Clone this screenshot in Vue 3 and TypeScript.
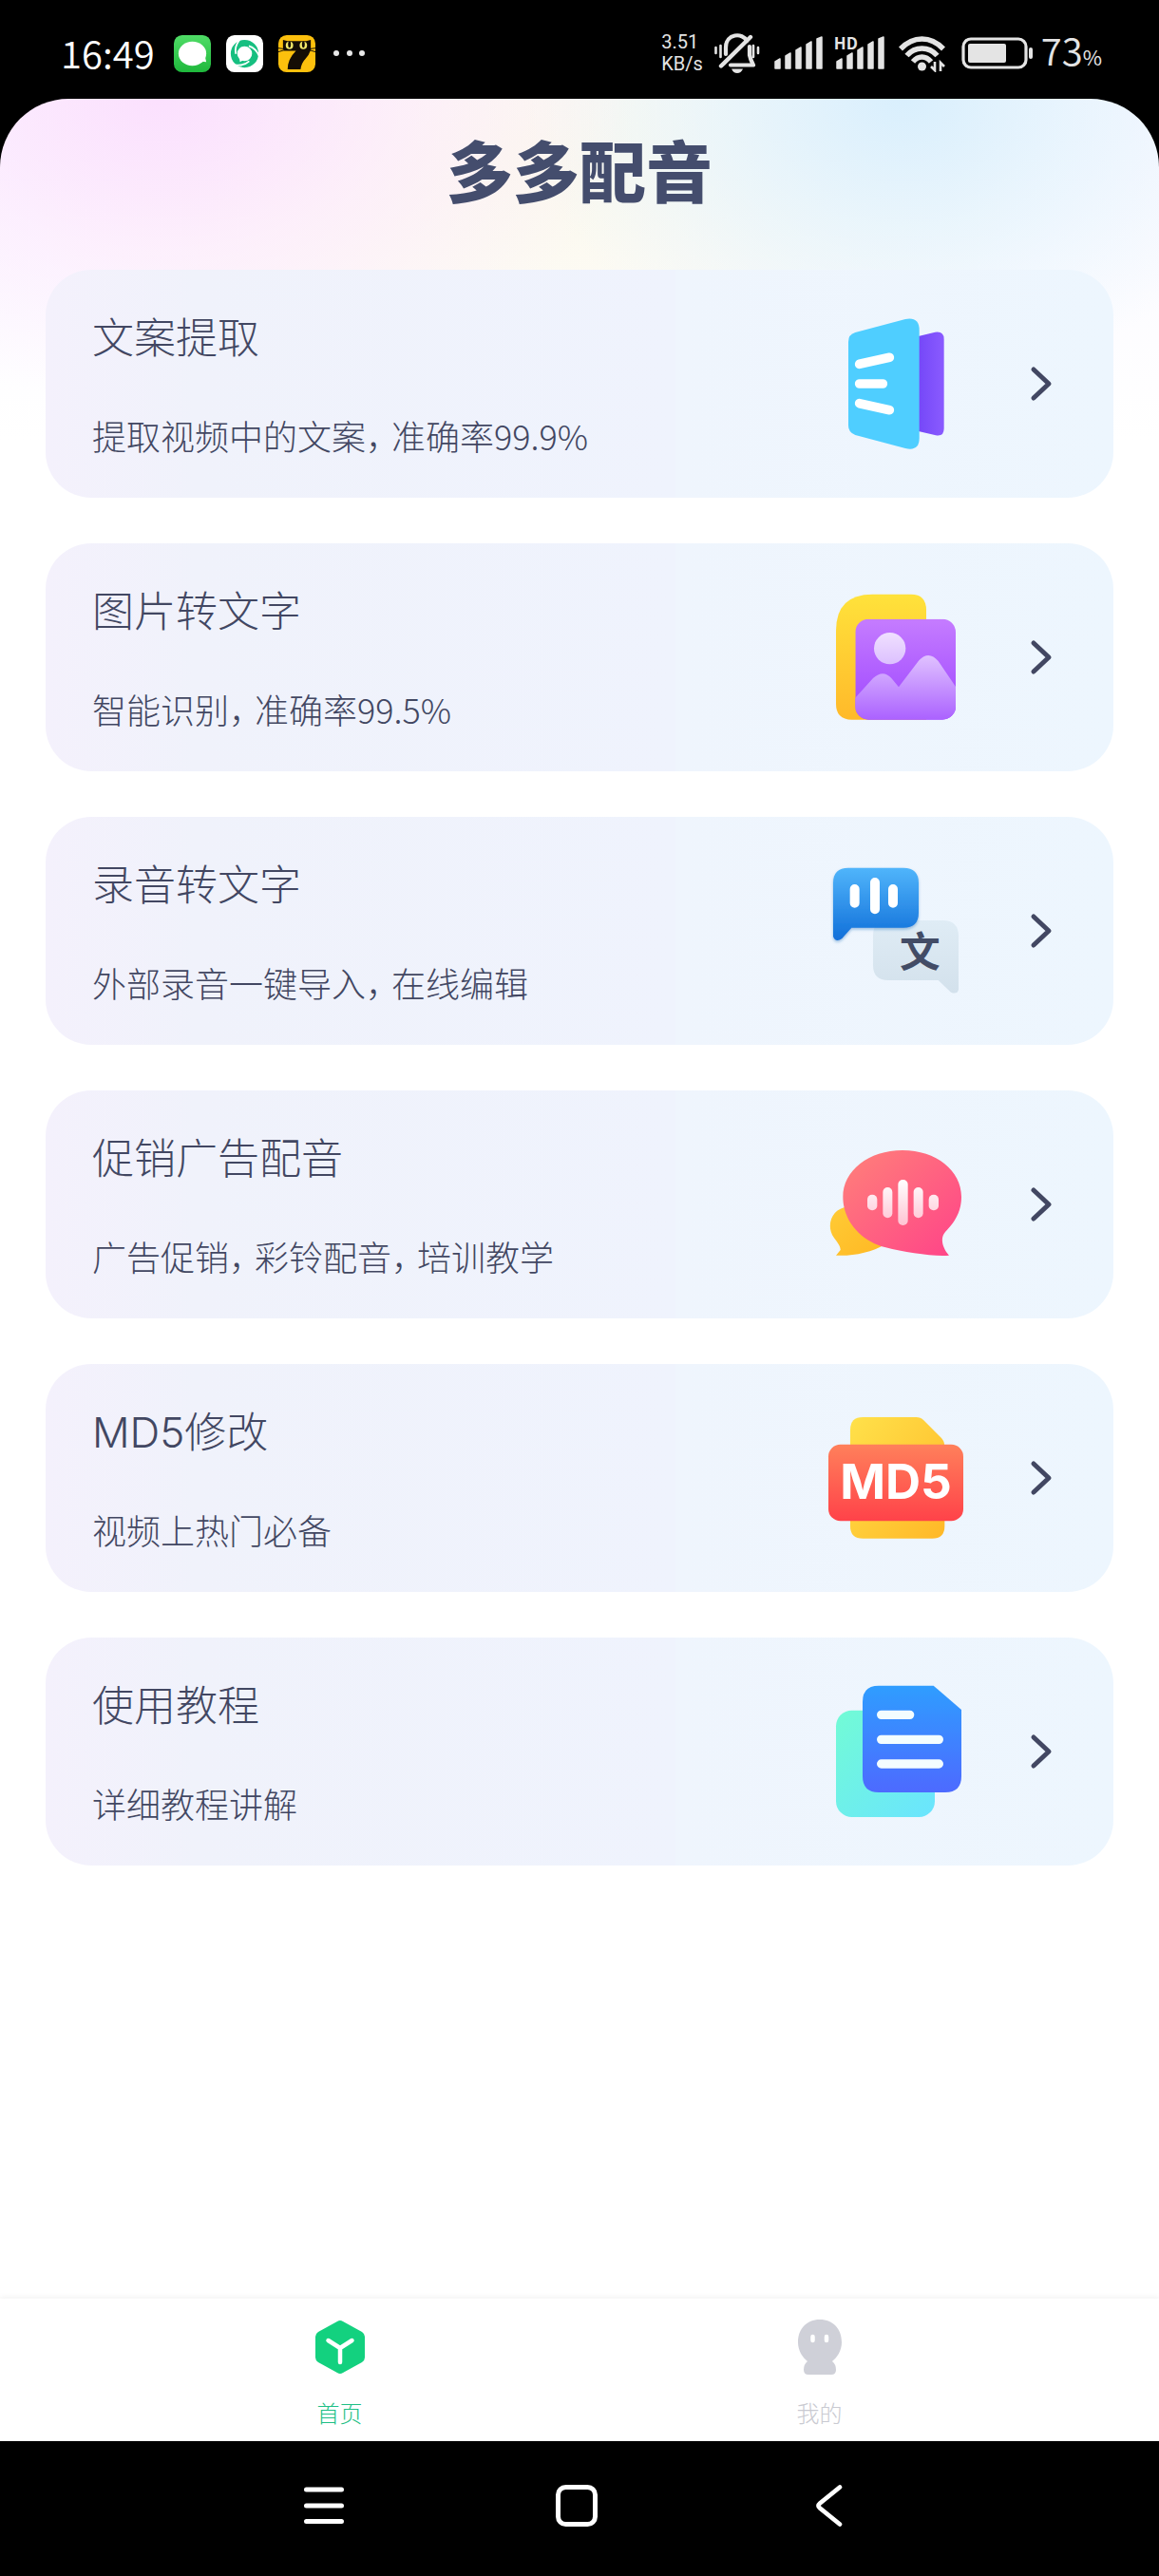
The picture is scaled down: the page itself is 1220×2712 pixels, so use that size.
<script setup lang="ts">
interface Feature {
  id: string
  title: string
  desc: string
  viewBox: string
}

const features: Feature[] = [
  { id: 'extract', title: '文案提取', desc: '提取视频中的文案，准确率99.9%', viewBox: '96 96 432 432' },
  { id: 'image', title: '图片转文字', desc: '智能识别，准确率99.5%', viewBox: '96 90 432 432' },
  { id: 'record', title: '录音转文字', desc: '外部录音一键导入，在线编辑', viewBox: '96 84 432 432' },
  { id: 'promo', title: '促销广告配音', desc: '广告促销，彩铃配音，培训教学', viewBox: '96 78 432 432' },
  { id: 'md5', title: 'MD5修改', desc: '视频上热门必备', viewBox: '96 102 432 432' },
  { id: 'guide', title: '使用教程', desc: '详细教程讲解', viewBox: '96 96 432 432' },
]

// Commas are set narrower than a full character cell, so the line is split around them.
const pieces = (text: string): string[] => text.split(/(，)/)
</script>

<template>
  <div class="phone">
    <header class="status">
      <div class="status-side">
        <time class="clock">16:49</time>
        <div class="apps">
          <svg class="app" viewBox="0 0 40 40" aria-hidden="true">
            <defs>
              <linearGradient id="msg" x1="0" y1="0" x2="0" y2="1">
                <stop offset="0" stop-color="#4fdc66" /><stop offset="1" stop-color="#1fb83c" />
              </linearGradient>
            </defs>
            <rect width="40" height="40" rx="9" fill="url(#msg)" />
            <ellipse cx="20" cy="20" rx="15" ry="13" fill="#fff" />
            <path d="M26 28l9 1-2-9z" fill="#fff" />
          </svg>
          <svg class="app" viewBox="0 0 40 40" aria-hidden="true">
            <rect width="40" height="40" rx="9" fill="#fff" />
            <circle cx="20" cy="20" r="11.500" fill="none" stroke="#16bf80" stroke-width="7" />
            <g fill="none" stroke="#fff" stroke-width="1.800">
              <path d="M11 17Q12 9 20 4" transform="rotate(-20 20 20)" />
              <path d="M11 17Q12 9 20 4" transform="rotate(100 20 20)" />
              <path d="M11 17Q12 9 20 4" transform="rotate(220 20 20)" />
            </g>
            <path d="M14 22L15 29L20 26Z" fill="#fff" />
          </svg>
          <svg class="app" viewBox="0 0 40 40" aria-hidden="true">
            <rect width="40" height="40" rx="9" fill="#fcc00d" />
            <path d="M5 5L10 6.500H30L35 5V16Q33 22 29 26Q25 30 24 37H10Q10 26 19 17H8Q5 17 5 13Z" fill="#140d05" />
            <path d="M0 14L7 15M0 18L7 16M40 14L33 15M40 18L33 16" stroke="#140d05" stroke-width="1" />
            <g fill="#f2e86a"><circle cx="12" cy="11" r="4" /><circle cx="27" cy="11" r="4" /></g>
            <g fill="#140d05"><ellipse cx="12" cy="10" rx="1.500" ry="3.500" /><ellipse cx="27" cy="10" rx="1.500" ry="3.500" /></g>
          </svg>
        </div>
        <svg class="dots" viewBox="0 0 36 8" aria-hidden="true">
          <g fill="#e8e8e8"><circle cx="4" cy="4" r="3" /><circle cx="18" cy="4" r="3" /><circle cx="31" cy="4" r="3" /></g>
        </svg>
      </div>
      <div class="status-side">
        <div class="speed"><span>3.51</span><span>KB/s</span></div>
        <svg class="bell" viewBox="0 0 48 42" aria-hidden="true">
          <g fill="none" stroke="#e4e4e4" stroke-linecap="round">
            <path d="M1.500 15v6M6.500 13v12M41 13v12M46 15v6" stroke-width="2.600" />
            <path d="M12 22V15C12 0 30 -1 34 8M37 14V23Q38 28 41 33.500H17" stroke-width="4.200" stroke-linejoin="round" />
            <path d="M38 4L7 34.500" stroke-width="4.400" />
          </g>
          <path d="M18 37.500H30Q28 42 24 42T18 37.500Z" fill="#e4e4e4" />
        </svg>
        <svg class="signal" viewBox="0 0 52 36" aria-hidden="true">
          <path d="M1 27L6 24V34H1ZM12 21L17 18V34H12ZM23 15L28 12V34H23ZM34 9L39 6V34H34ZM45 3L50 1V34H45Z" fill="#e4e4e4" stroke="#e4e4e4" stroke-width="1.500" stroke-linejoin="round" />
        </svg>
        <div class="hd-signal">
          <svg class="signal" viewBox="0 0 52 36" aria-hidden="true">
            <path d="M1 27L6 24V34H1ZM12 21L17 18V34H12ZM23 15L28 12V34H23ZM34 9L39 6V34H34ZM45 3L50 1V34H45Z" fill="#e4e4e4" stroke="#e4e4e4" stroke-width="1.500" stroke-linejoin="round" />
          </svg>
          <span class="hd">HD</span>
        </div>
        <svg class="wifi" viewBox="0 0 50 40" aria-hidden="true">
          <g fill="none" stroke="#e4e4e4" stroke-width="5.500">
            <path d="M2 15.500Q12 5 24.500 5T47 15.500" />
            <path d="M8.500 22.500Q15 15 24.500 15T40.500 22.500" />
            <path d="M15 29Q19 24 24.500 24T34 29" />
          </g>
          <circle cx="24.500" cy="34" r="4.500" fill="#e4e4e4" />
          <path d="M38 29V38L34 34M44 39V30L48 34" fill="none" stroke="#e4e4e4" stroke-width="2.600" />
        </svg>
        <svg class="battery" viewBox="0 0 76 34" aria-hidden="true">
          <rect x="2" y="2" width="66" height="30" rx="8" fill="none" stroke="#e4e4e4" stroke-width="3.200" />
          <rect x="7" y="7" width="40" height="20" rx="2" fill="#e4e4e4" />
          <rect x="71" y="11" width="4" height="12" rx="2" fill="#e4e4e4" />
        </svg>
        <div class="level"><span>73</span><span class="percent">%</span></div>
      </div>
    </header>

    <div class="page">
      <h1 class="brand">多多配音</h1>

      <main class="cards">
        <button v-for="f in features" :key="f.id" type="button" class="card">
          <span class="words">
            <span class="title">{{ f.title }}</span>
            <span class="desc"><template v-for="(p, i) in pieces(f.desc)" :key="i"><span v-if="p === '，'" class="comma">，</span><template v-else>{{ p }}</template></template></span>
          </span>

          <svg class="art" :viewBox="f.viewBox" aria-hidden="true">
            <template v-if="f.id === 'extract'">
              <defs>
                <linearGradient id="ex" x1="0" y1="0" x2="1" y2="0">
                  <stop offset="0" stop-color="#7447f8" /><stop offset="1" stop-color="#8a5bff" />
                </linearGradient>
              </defs>
              <path d="M380 163L436 149Q464 145 464 171V453Q464 480 438 475L380 461Z" fill="url(#ex)" />
              <path d="M184 150L342 108Q386 100 386 142V484Q386 526 342 516L184 474Q162 466 162 444V180Q162 156 184 150Z" fill="#4fceff" />
              <path d="M197 250L292 229M197 312H271M197 374L292 395" stroke="#fff" stroke-width="29" stroke-linecap="round" />
            </template>

            <template v-else-if="f.id === 'image'">
              <defs>
                <linearGradient id="imA" x1="0" y1="0" x2="0" y2="1">
                  <stop offset="0" stop-color="#ffe23b" /><stop offset="1" stop-color="#ffb92a" />
                </linearGradient>
                <linearGradient id="imB" x1="0" y1="0" x2="0" y2="1">
                  <stop offset="0" stop-color="#c57cff" /><stop offset="1" stop-color="#9d45ff" />
                </linearGradient>
                <linearGradient id="imC" x1="0" y1="0" x2="0" y2="1">
                  <stop offset="0" stop-color="#e0c2ff" /><stop offset="1" stop-color="#a95eff" />
                </linearGradient>
                <linearGradient id="imD" x1="0" y1="0" x2="0" y2="1">
                  <stop offset="0" stop-color="#f0e0ff" /><stop offset="1" stop-color="#dcc0ff" />
                </linearGradient>
                <clipPath id="imE"><rect x="184" y="185" width="317" height="318" rx="42" /></clipPath>
              </defs>
              <path d="M238 107H360Q408 107 408 157V503H173Q123 503 123 453V222Q123 107 238 107Z" fill="url(#imA)" />
              <g clip-path="url(#imE)">
                <rect x="184" y="185" width="317" height="318" fill="url(#imB)" />
                <path d="M180 438L240 372Q272 344 298 372L321 400L385 316Q416 283 446 318L505 405V510H180Z" fill="url(#imC)" />
              </g>
              <circle cx="293" cy="278" r="50" fill="url(#imD)" />
            </template>

            <template v-else-if="f.id === 'record'">
              <defs>
                <linearGradient id="reA" x1="0" y1="0" x2="0" y2="1">
                  <stop offset="0" stop-color="#50b5fb" /><stop offset="1" stop-color="#116fd9" />
                </linearGradient>
                <linearGradient id="reB" x1="0" y1="0" x2="0" y2="1">
                  <stop offset="0" stop-color="#dfecf5" /><stop offset="1" stop-color="#d3e1ec" />
                </linearGradient>
                <filter id="reC" x="-20%" y="-20%" width="140%" height="140%">
                  <feDropShadow dx="0" dy="5" stdDeviation="5" flood-color="#1465b4" flood-opacity=".4" />
                </filter>
              </defs>
              <path d="M288 267H460Q510 267 510 317V485Q506 502 486 494L446 456H288Q240 456 240 408V315Q240 267 288 267Z" fill="url(#reB)" />
              <path d="M162 101H336Q384 101 384 149V242Q384 290 336 290H172L142 324Q122 338 114 318V149Q114 101 162 101Z" fill="url(#reA)" filter="url(#reC)" />
              <path d="M182 168V212M246 147V232M303 168V212" stroke="#fff" stroke-width="30" stroke-linecap="round" />
              <text x="388" y="413" class="glyph" text-anchor="middle">文</text>
            </template>

            <template v-else-if="f.id === 'promo'">
              <defs>
                <linearGradient id="prA" x1="0" y1="0" x2="1" y2="1">
                  <stop offset=".1" stop-color="#ff7b7b" /><stop offset=".9" stop-color="#ff4987" />
                </linearGradient>
                <linearGradient id="prB" x1="0" y1="0" x2="1" y2="1">
                  <stop offset="0" stop-color="#ffcb35" /><stop offset="1" stop-color="#ffb824" />
                </linearGradient>
                <linearGradient id="prC" gradientUnits="userSpaceOnUse" x1="0" y1="215" x2="0" y2="362">
                  <stop offset="0" stop-color="#fff" /><stop offset="1" stop-color="#ffc2d2" />
                </linearGradient>
              </defs>
              <path d="M160 302C112 304 88 360 117 400Q139 428 137 438L123 455C175 458 235 446 278 420Z" fill="url(#prB)" />
              <path d="M333 123C440 123 519 188 519 270C519 318 497 351 468 381C450 401 460 432 480 455C430 459 340 446 280 430C205 411 145 350 145 270C145 188 226 123 333 123Z" fill="url(#prA)" />
              <g fill="url(#prC)">
                <rect x="222" y="263" width="31" height="50" rx="15" /><rect x="271" y="240" width="30" height="97" rx="15" />
                <rect x="319" y="216" width="31" height="144" rx="15" /><rect x="368" y="240" width="30" height="97" rx="15" />
                <rect x="416" y="263" width="31" height="50" rx="15" />
              </g>
            </template>

            <template v-else-if="f.id === 'md5'">
              <defs>
                <linearGradient id="mdA" x1="0" y1="0" x2="1" y2="1">
                  <stop offset="0" stop-color="#ffe14a" /><stop offset="1" stop-color="#ffb827" />
                </linearGradient>
                <linearGradient id="mdB" x1="0" y1="0" x2="0" y2="1">
                  <stop offset="0" stop-color="#ff805b" /><stop offset="1" stop-color="#ff4249" />
                </linearGradient>
              </defs>
              <path d="M208 126H376Q390 126 400 136L456 192Q466 203 466 218V470Q466 509 427 509H208Q168 509 168 470V166Q168 126 208 126Z" fill="url(#mdA)" />
              <rect x="99" y="212" width="426" height="242" rx="38" fill="url(#mdB)" />
              <text x="312" y="384" class="md5" text-anchor="middle">MD5</text>
            </template>

            <template v-else>
              <defs>
                <linearGradient id="guA" x1="0" y1="0" x2="1" y2="1">
                  <stop offset="0" stop-color="#72fbd5" /><stop offset="1" stop-color="#6ae4ff" />
                </linearGradient>
                <linearGradient id="guB" x1="0" y1="0" x2="0" y2="1">
                  <stop offset="0" stop-color="#2f9dff" /><stop offset="1" stop-color="#4d6aff" />
                </linearGradient>
              </defs>
              <rect x="123" y="182" width="312" height="337" rx="50" fill="url(#guA)" />
              <path d="M258 104H431L519 180V390Q519 441 468 441H258Q207 441 207 390V155Q207 104 258 104Z" fill="url(#guB)" />
              <path d="M266 196H356M266 274H448M266 351H448" stroke="#f3fdff" stroke-width="28" stroke-linecap="round" />
            </template>
          </svg>

          <svg class="chevron" viewBox="0 0 48 48" aria-hidden="true">
            <path d="M17 9L33 24L17 39" fill="none" stroke="#424762" stroke-width="5" stroke-linecap="round" stroke-linejoin="round" />
          </svg>
        </button>
      </main>

      <nav class="tabs">
        <a href="#home" class="tab active">
          <svg class="tab-icon" viewBox="0 0 56 58" aria-hidden="true">
            <path d="M25 2Q28 0 31 2L51 13Q54 15 54 18V40Q54 43 51 45L31 56Q28 58 25 56L5 45Q2 43 2 40V18Q2 15 5 13Z" fill="#13d17f" />
            <path d="M15.500 22L28 30L40.500 22M28 30V45" fill="none" stroke="#fff" stroke-width="4.500" stroke-linecap="round" stroke-linejoin="round" />
          </svg>
          <span>首页</span>
        </a>
        <a href="#mine" class="tab">
          <svg class="tab-icon" viewBox="0 0 56 58" aria-hidden="true">
            <path d="M28 0C42 0 51 10 51 24C51 33 46 40 41 44Q45 47 45 53Q45 58 40 58H16Q11 58 11 53Q11 47 15 44C10 40 5 33 5 24C5 10 14 0 28 0Z" fill="#cfd0d8" />
            <path d="M20.500 18V22M35 18V22" stroke="#fff" stroke-width="4.500" stroke-linecap="round" />
          </svg>
          <span>我的</span>
        </a>
      </nav>
    </div>

    <footer class="system">
      <button type="button" class="key" aria-label="最近任务">
        <svg viewBox="0 0 64 64"><path d="M13.500 15H50.500M13.500 32H50.500M13.500 48.500H50.500" stroke="#fff" stroke-width="5" stroke-linecap="round" /></svg>
      </button>
      <button type="button" class="key" aria-label="主屏幕">
        <svg viewBox="0 0 64 64"><rect x="12.500" y="12.500" width="39" height="39" rx="8" fill="none" stroke="#fff" stroke-width="5" /></svg>
      </button>
      <button type="button" class="key" aria-label="返回">
        <svg viewBox="0 0 64 64"><path d="M43 12.500L22 29.500Q19 32 22 34.500L43 51.500" fill="none" stroke="#fff" stroke-width="4.800" stroke-linecap="round" /></svg>
      </button>
    </footer>
  </div>
</template>

<style>
body {
  margin: 0;
  background: #000;
}
</style>

<style scoped>
.phone {
  display: flex;
  flex-direction: column;
  min-height: 100vh;
  background: #000;
  font-family: "Noto Sans CJK SC", sans-serif;
}

svg {
  display: block;
  flex: none;
}

.status {
  display: flex;
  justify-content: space-between;
  align-items: center;
  height: 104px;
  padding: 8px 60px 0 64px;
  box-sizing: border-box;
  color: #e4e4e4;
}

.status-side {
  display: flex;
  align-items: center;
}

.clock,
.level {
  padding-bottom: 2px;
  font-size: 40px;
  line-height: 48px;
  font-weight: 350;
}

.clock {
  color: #fff;
}

.level {
  display: flex;
  align-items: baseline;
}

.percent {
  font-size: 22px;
  font-weight: 400;
}

.apps {
  display: flex;
  gap: 16px;
  margin: 0 18px 0 20px;
}

.app {
  width: 39px;
  height: 39px;
}

.dots {
  width: 36px;
  height: 8px;
}

.speed {
  display: flex;
  flex-direction: column;
  font-family: Roboto, sans-serif;
  font-size: 20px;
  line-height: 23px;
}

.bell {
  width: 48px;
  height: 42px;
  margin: 0 15px 0 12px;
}

.signal {
  width: 52px;
  height: 36px;
}

.hd-signal {
  position: relative;
  margin: 0 14px 0 13px;
}

.hd {
  position: absolute;
  left: -2px;
  top: -2px;
  font-size: 17px;
  line-height: 17px;
  font-weight: 700;
}

.wifi {
  width: 50px;
  height: 40px;
}

.battery {
  width: 76px;
  height: 34px;
  margin: 0 8px 0 16px;
}

.page {
  flex: 1;
  display: flex;
  flex-direction: column;
  border-radius: 72px 72px 0 0;
  overflow: hidden;
  background:
    radial-gradient(ellipse 500px 320px at 170px 0, #fbe0fe, rgba(253, 232, 254, 0.6) 50%, rgba(255, 245, 255, 0)),
    radial-gradient(ellipse 400px 300px at 78% 0, #d9effd, rgba(226, 243, 253, 0.7) 45%, rgba(240, 248, 255, 0)),
    radial-gradient(ellipse 560px 310px at 46% 60px, #fbf9ec, rgba(253, 250, 240, 0.7) 50%, rgba(255, 255, 250, 0)),
    linear-gradient(#f9f8ff, #fff 360px);
}

.brand {
  margin: 0;
  padding: 34px 0 66px;
  color: #444d6d;
  font-size: 70px;
  line-height: 80px;
  font-weight: 900;
  text-align: center;
}

.cards {
  flex: 1;
  display: flex;
  flex-direction: column;
  gap: 48px;
  padding: 0 48px 48px;
}

.card {
  display: flex;
  align-items: center;
  padding: 42px 53px 42px 49px;
  border: 0;
  border-radius: 48px;
  background: linear-gradient(90deg, #f4f1fc, #f0f2fb 14%, #eff3fd 59%, #eff5fd 59%, #edf6fe);
  color: #424762;
  font-family: inherit;
  font-weight: 300;
  text-align: left;
}

.words {
  flex: 1;
  display: flex;
  flex-direction: column;
  gap: 48px;
}

.title {
  font-family: Inter, "Noto Sans CJK SC", sans-serif;
  font-size: 44px;
  line-height: 60px;
}

.desc {
  font-size: 36px;
  line-height: 48px;
}

.comma {
  display: inline-block;
  width: 27px;
  font-feature-settings: "halt";
}

.art {
  width: 144px;
  height: 144px;
  margin-right: 56px;
}

.glyph {
  fill: #424c66;
  font-size: 128px;
  font-weight: 700;
}

.md5 {
  fill: #fff;
  font-family: Inter, sans-serif;
  font-size: 154px;
  font-weight: 700;
}

.chevron {
  width: 48px;
  height: 48px;
}

.tabs {
  display: flex;
  justify-content: space-around;
  padding: 22px 105px 14px;
  background: #fff;
  box-shadow: 0 -2px 6px rgba(0, 0, 0, 0.05);
}

.tab {
  display: flex;
  flex-direction: column;
  align-items: center;
  gap: 24px;
  color: #c9cad1;
  font-size: 24px;
  line-height: 32px;
  font-weight: 300;
  text-decoration: none;
}

.tab.active {
  color: #1fbf86;
}

.tab-icon {
  width: 56px;
  height: 58px;
}

.system {
  display: flex;
  justify-content: center;
  gap: 202px;
  padding: 36px 6px 42px 0;
}

.key {
  padding: 0;
  border: 0;
  background: none;
}

.key svg {
  width: 64px;
  height: 64px;
}
</style>
